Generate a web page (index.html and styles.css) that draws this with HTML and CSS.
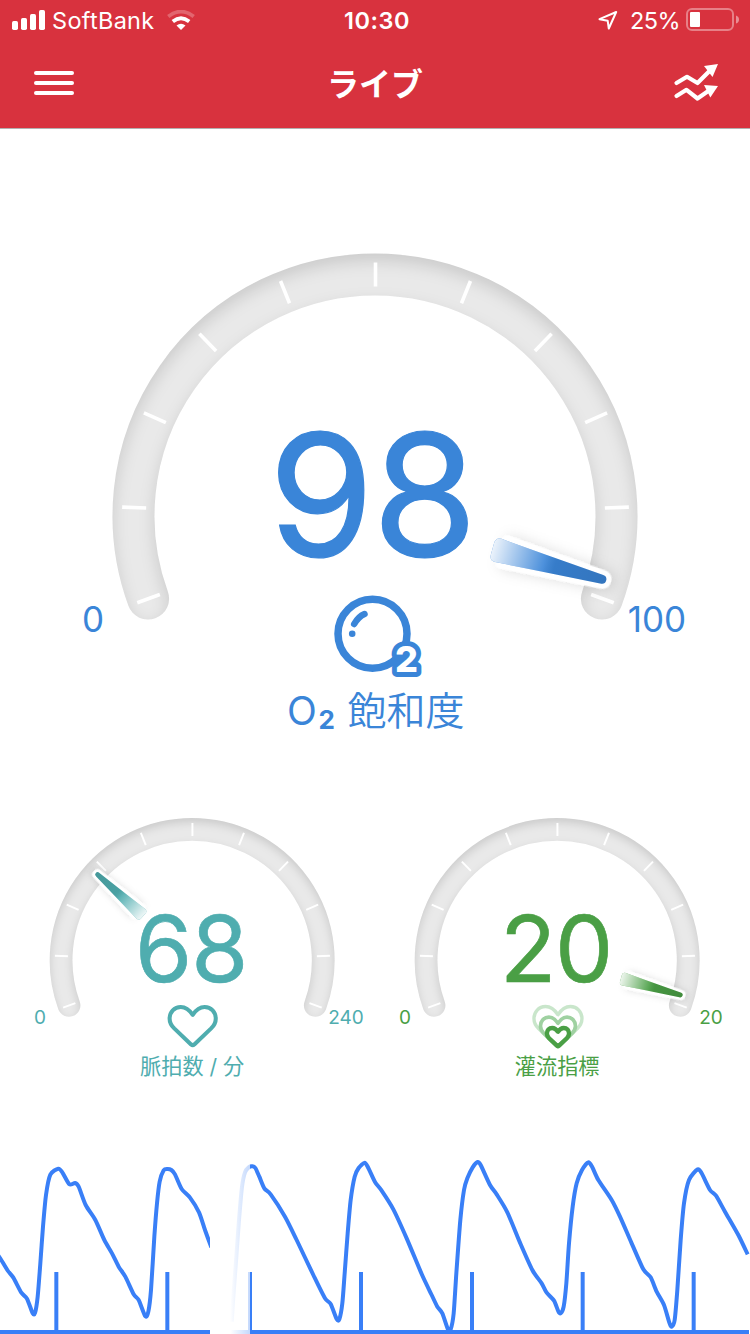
FILE: index.html
```
<!DOCTYPE html>
<html lang="ja">
<head>
    <meta charset="UTF-8">
    <meta name="viewport" content="width=device-width, initial-scale=1.0">
    <title>ライブ</title>
    <link rel="stylesheet" href="styles.css">
</head>
<body>
    <!-- shared gauge parts, origin is the dial centre -->
    <svg class="defs" width="0" height="0">
        <defs>
            <filter id="inset" filterUnits="userSpaceOnUse" x="-300" y="-300" width="600" height="480" color-interpolation-filters="sRGB">
                <feFlood flood-color="#000" flood-opacity="0.13" result="dark"/>
                <feComposite in="dark" in2="SourceAlpha" operator="out" result="outside"/>
                <feGaussianBlur in="outside" stdDeviation="8" result="blur"/>
                <feOffset in="blur" dy="7" result="moved"/>
                <feComposite in="moved" in2="SourceAlpha" operator="in" result="shade"/>
                <feMerge>
                    <feMergeNode in="SourceGraphic"/>
                    <feMergeNode in="shade"/>
                </feMerge>
            </filter>
            <filter id="drop" filterUnits="userSpaceOnUse" x="-60" y="-280" width="120" height="200">
                <feDropShadow dx="0" dy="-4" stdDeviation="7" flood-color="#000" flood-opacity="0.13"/>
            </filter>
            <linearGradient id="fade" x1="0" y1="0" x2="0" y2="1">
                <stop offset="0" stop-color="#000" stop-opacity="0.12"/>
                <stop offset="0.45" stop-color="#000" stop-opacity="0.07"/>
                <stop offset="0.55" stop-color="#fff" stop-opacity="0.1"/>
                <stop offset="1" stop-color="#fff" stop-opacity="0.9"/>
            </linearGradient>
            <g id="dial">
                <path class="band" d="M-226.9 82.6A241.5 241.5 0 1 1 226.9 82.6" filter="url(#inset)"/>
                <g class="ticks" transform="translate(.5 0)">
                    <path id="tick" d="M0 -253.500V-229.500"/>
                    <use href="#tick" transform="rotate(-110)"/>
                    <use href="#tick" transform="rotate(-88)"/>
                    <use href="#tick" transform="rotate(-66)"/>
                    <use href="#tick" transform="rotate(-44)"/>
                    <use href="#tick" transform="rotate(-22)"/>
                    <use href="#tick" transform="rotate(22)"/>
                    <use href="#tick" transform="rotate(44)"/>
                    <use href="#tick" transform="rotate(66)"/>
                    <use href="#tick" transform="rotate(88)"/>
                    <use href="#tick" transform="rotate(110)"/>
                </g>
            </g>
            <g id="needle">
                <path class="needle-edge" filter="url(#drop)" d="M-4.5 -235Q-4.5 -240 0 -240Q4.5 -240 4.5 -235L12 -134H-12Z"/>
                <path fill="currentColor" d="M-4.5 -235Q-4.5 -240 0 -240Q4.5 -240 4.5 -235L12 -128Q12 -122 6 -122H-6Q-12 -122 -12 -128Z"/>
                <path fill="url(#fade)" d="M-4.5 -235Q-4.5 -240 0 -240Q4.5 -240 4.5 -235L12 -128Q12 -122 6 -122H-6Q-12 -122 -12 -128Z"/>
            </g>
            <path id="heart" d="M0 -56C-6 -65 -13 -70.5 -22 -70.5C-34 -70.5 -42.5 -61 -42.5 -49C-42.5 -41 -39 -36 -34 -31L-3 -1.5Q0 1 3 -1.5L34 -31C39 -36 42.5 -41 42.5 -49C42.5 -61 34 -70.5 22 -70.5C13 -70.5 6 -65 0 -56Z"/>
        </defs>
    </svg>

    <header class="header">
        <div class="status">
            <div class="status-left">
                <svg class="signal" width="34" height="20" viewBox="0 0 34 20">
                    <rect x="0" y="11" width="6" height="9" rx="1.7"/>
                    <rect x="9" y="8" width="6" height="12" rx="1.7"/>
                    <rect x="18" y="4" width="6" height="16" rx="1.7"/>
                    <rect x="27" y="0" width="6" height="20" rx="1.7"/>
                </svg>
                <span class="carrier">SoftBank</span>
                <svg class="wifi" width="28" height="20" viewBox="0 0 28 20">
                    <path class="dim" d="M1.300 6.500Q14 -3.300 26.700 6.500"/>
                    <path d="M5.800 11.500Q14 5 22.200 11.500"/>
                    <path class="solid" d="M14 20L9.500 15.500Q14 12 18.500 15.500Z"/>
                </svg>
            </div>
            <div class="clock">10:30</div>
            <div class="status-right">
                <svg class="location" width="20" height="20" viewBox="0 0 20 20">
                    <path d="M18.200 2L10.800 18.500L9.700 10.800L1.500 9.200Z"/>
                </svg>
                <span class="percent">25%</span>
                <svg class="battery" width="54" height="24" viewBox="0 0 54 24">
                    <rect class="case" x="1" y="1" width="46" height="21" rx="5"/>
                    <rect x="4" y="4" width="10" height="15" rx="1"/>
                    <path class="nub" d="M50 7.500Q53 8.500 53 11.500Q53 14.500 50 15.500Z"/>
                </svg>
            </div>
        </div>
        <nav class="nav">
            <div class="menu">
                <span></span>
                <span></span>
                <span></span>
            </div>
            <h1>ライブ</h1>
            <svg class="trend" width="46" height="38" viewBox="0 0 46 38">
                <path class="line" d="M3.500 19L14 12.800L24.500 19L37 6.500"/>
                <path class="line" d="M3.500 32L13.500 25.800L24.500 34.500L36 26.500"/>
                <path d="M45 0L39.500 13L31 2Z"/>
                <path d="M45 22L37.300 33.500L31 21Z"/>
            </svg>
        </nav>
    </header>

    <main>
        <svg class="gauge gauge-main blue" viewBox="-330 -270 660 500">
            <use href="#dial"/>
            <text class="value" x="-2" y="40" textLength="209">98</text>
            <use href="#needle" transform="rotate(105.6)"/>
            <text class="limit" x="-282" y="116">0</text>
            <text class="limit" x="282" y="116">100</text>
            <g class="icon">
                <circle cx="-2.500" cy="117.800" r="34.500"/>
                <path class="shine" d="M-20.800 108Q-16.500 100.500 -10.500 98"/>
                <circle class="dot" cx="-22.800" cy="117.800" r="3.300"/>
                <text class="sub" x="31.500" y="156">2</text>
            </g>
            <text class="label label-o" x="-88" y="209">O</text>
            <text class="label label-sub" x="-56.500" y="213">2</text>
            <text class="label" x="-27.500" y="208.500">飽和度</text>
        </svg>

        <div class="row">
            <svg class="gauge teal" viewBox="-330 -270 660 500">
                <use href="#dial"/>
                <use href="#needle" transform="rotate(-47.7)"/>
                <text class="value" x="-1" y="40" textLength="209">68</text>
                <text class="limit" x="-280.500" y="116">0</text>
                <text class="limit" x="283.500" y="116">240</text>
                <use class="icon" href="#heart" transform="translate(1 156)"/>
                <text class="label middle" x="0" y="209.500">脈拍数 / 分</text>
            </svg>
            <svg class="gauge green" viewBox="-330 -270 660 500">
                <use href="#dial"/>
                <text class="value" x="-1" y="40" textLength="209">20</text>
                <use href="#needle" transform="rotate(105.6)"/>
                <text class="limit" x="-280.500" y="116">0</text>
                <text class="limit" x="283.500" y="116">20</text>
                <use class="icon heart-far" href="#heart" transform="translate(1.5 158) scale(1.04)"/>
                <use class="icon heart-mid" href="#heart" transform="translate(1.5 158) scale(.76)"/>
                <use class="icon heart-near" href="#heart" transform="translate(1.5 158) scale(.48)"/>
                <text class="label middle" x="0" y="209.500">灌流指標</text>
            </svg>
        </div>
    </main>

    <!-- pleth waveform, 3 units per pixel -->
    <svg class="wave" viewBox="0 0 2250 582">
        <defs>
            <linearGradient id="sweep">
                <stop offset="0" stop-color="#fff"/>
                <stop offset="1" stop-color="#fff" stop-opacity=".7"/>
            </linearGradient>
        </defs>
        <path class="trace" id="trace-new"/>
        <path class="trace" id="trace-old"/>
        <path class="beats" d="M169 396V576M502 396V576M750 396V576M1083 396V576M1416 396V576M1748 396V576M2081 396V576"/>
        <path class="beats" d="M0 576H630M690 576H2247"/>
        <rect x="630" y="0" width="60" height="582" fill="#fff"/>
        <rect x="690" y="0" width="60" height="582" fill="url(#sweep)"/>
    </svg>

    <script>
        const newest = [
            [-10, 340], [2, 357], [24, 393], [40, 413], [64, 458], [81, 476], [98, 520], [105, 519], [113, 470], [121, 370],
            [129, 260], [138, 165], [151, 104], [175, 86], [187, 97], [208, 133], [225, 129], [236, 140], [257, 195],
            [286, 240], [313, 300], [336, 340], [356, 380], [376, 410], [401, 463], [416, 480], [436, 529], [445, 515],
            [453, 450], [463, 290], [471, 190], [479, 125], [491, 91], [502, 87], [514, 90], [525, 103], [545, 147],
            [570, 173], [597, 217], [615, 270], [634, 322]
        ];
        const oldest = [
            [695, 545], [700, 470], [709, 350], [717, 240], [726, 140], [735, 97], [746, 82], [757, 79], [766, 84],
            [778, 110], [793, 145], [812, 163], [855, 230], [890, 300], [940, 405], [975, 475], [992, 492], [1010, 537],
            [1018, 538], [1027, 490], [1034, 400], [1043, 280], [1052, 180], [1064, 110], [1076, 84], [1094, 68],
            [1105, 84], [1125, 126], [1145, 152], [1180, 208], [1220, 295], [1265, 402], [1295, 465], [1312, 500],
            [1327, 520], [1344, 568], [1352, 568], [1361, 520], [1369, 400], [1381, 240], [1392, 150], [1402, 115],
            [1418, 82], [1433, 66], [1442, 75], [1470, 135], [1490, 163], [1522, 217], [1560, 308], [1597, 390],
            [1625, 430], [1640, 458], [1662, 482], [1675, 514], [1682, 520], [1691, 500], [1699, 430], [1707, 310],
            [1718, 200], [1730, 130], [1746, 90], [1765, 67], [1777, 82], [1795, 120], [1835, 180], [1860, 230],
            [1895, 310], [1930, 388], [1952, 412], [1970, 455], [1992, 495], [2008, 548], [2015, 560], [2024, 540],
            [2032, 450], [2042, 300], [2052, 190], [2067, 120], [2093, 88], [2105, 100], [2130, 150], [2148, 167],
            [2175, 215], [2215, 285], [2243, 343]
        ];

        // smooth curve through all the samples
        function curve(points) {
            let d = 'M' + points[0];
            for (let i = 0; i < points.length - 1; i++) {
                const a = points[i - 1] || points[i];
                const b = points[i];
                const c = points[i + 1];
                const e = points[i + 2] || c;
                d += 'C' + [
                    b[0] + (c[0] - a[0]) / 8, b[1] + (c[1] - a[1]) / 8,
                    c[0] - (e[0] - b[0]) / 8, c[1] - (e[1] - b[1]) / 8,
                    c[0], c[1]
                ];
            }
            return d;
        }

        document.getElementById('trace-new').setAttribute('d', curve(newest));
        document.getElementById('trace-old').setAttribute('d', curve(oldest));
    </script>
</body>
</html>
```

FILE: styles.css
```
* {
    box-sizing: border-box;
}

body {
    margin: 0;
    width: 750px;
    height: 1334px;
    background-color: #fff;
    font-family: Inter, "Noto Sans CJK JP", sans-serif;
    display: flex;
    flex-direction: column;
    overflow: hidden;
}

.defs {
    position: absolute;
}

/* header */
.header {
    flex: none;
    height: 129px;
    background-color: #d8323e;
    border-bottom: 1px solid #b3b0b0;
    color: #fff;
}

.header svg {
    fill: #fff;
    flex: none;
}

.status {
    height: 40px;
    padding: 0 10px 0 12px;
    display: grid;
    grid-template-columns: 1fr auto 1fr;
    align-items: center;
    font-size: 23.5px;
    line-height: 40px;
}

.status-left,
.status-right {
    display: flex;
    align-items: center;
    height: 40px;
}

.status-right {
    justify-content: flex-end;
}

.carrier {
    margin-left: 6px;
    padding-top: 1px;
    letter-spacing: 0.3px;
}

.wifi {
    margin-left: 12px;
}

.header .wifi path {
    fill: none;
    stroke: #fff;
    stroke-width: 3.8;
}

.header .wifi .dim {
    opacity: 0.25;
}

.header .wifi .solid {
    fill: #fff;
    stroke: none;
}

.clock {
    padding-left: 2px;
    height: 40px;
    line-height: 41px;
    font-weight: 600;
    letter-spacing: 0.5px;
}

.header .location {
    fill: none;
    stroke: #fff;
    stroke-width: 2;
    stroke-linejoin: round;
    margin-right: 12px;
}

.percent {
    margin-right: 6px;
    padding-top: 1px;
    letter-spacing: -0.6px;
}

.header .battery .case {
    fill: none;
    stroke: #fff;
    stroke-width: 2;
    opacity: 0.38;
}

.battery .nub {
    opacity: 0.45;
}

.nav {
    height: 88px;
    padding: 0 31px 0 34px;
    display: grid;
    grid-template-columns: 1fr auto 1fr;
    align-items: center;
}

.menu {
    display: flex;
    flex-direction: column;
    gap: 6px;
    width: 40px;
    margin-bottom: 2px;
}

.menu span {
    height: 4px;
    border-radius: 2px;
    background-color: #fff;
}

.nav h1 {
    margin: 0 3px 0 0;
    padding-top: 2px;
    font-size: 32px;
    font-weight: 700;
    line-height: 86px;
}

.trend {
    justify-self: end;
    margin-bottom: 2px;
}

.header .trend .line {
    fill: none;
    stroke: #fff;
    stroke-width: 4.2;
    stroke-linecap: round;
    stroke-linejoin: round;
}

/* gauges */
main {
    flex: 1;
    padding-top: 116.5px;
    display: flex;
    flex-direction: column;
    align-items: center;
}

.row {
    display: flex;
    gap: 6.7px;
    margin-top: 68.4px;
}

.gauge {
    width: 358.3px;
    height: 271.4px;
    overflow: visible;
}

.gauge-main {
    width: 660px;
    height: 500px;
}

.blue {
    color: #3a85d8;
}

.teal {
    color: #4fadaf;
}

.green {
    color: #4a9f45;
}

.band {
    fill: none;
    stroke: #e9e9e9;
    stroke-width: 42;
    stroke-linecap: round;
}

.ticks {
    stroke: #fff;
    stroke-width: 3.6;
}

.needle-edge {
    fill: #fff;
    stroke: #fff;
    stroke-width: 10;
    stroke-linejoin: round;
}

.gauge text {
    fill: currentColor;
}

.value {
    font-size: 170px;
    font-weight: 400;
    text-anchor: middle;
    stroke: currentColor;
    stroke-width: 1.2;
}

.limit {
    font-size: 35px;
    text-anchor: middle;
}

.label {
    font-size: 39px;
    font-weight: 400;
}

.gauge-main .label {
    font-weight: 350;
}

.gauge-main .label-o {
    font-weight: 400;
}

.gauge-main .label-sub {
    font-size: 26px;
    font-weight: 700;
}

.middle {
    text-anchor: middle;
}

.icon {
    fill: none;
    stroke: currentColor;
    stroke-width: 7.5;
    stroke-linecap: round;
    stroke-linejoin: round;
}

.icon .shine {
    stroke-width: 6.5;
}

.icon .dot {
    fill: currentColor;
    stroke: none;
}

.gauge .sub {
    fill: #fff;
    font-size: 36px;
    font-weight: 800;
    text-anchor: middle;
    stroke-width: 10;
    paint-order: stroke;
}

.heart-far {
    color: #c9e6cb;
    stroke-width: 6;
}

.heart-mid {
    color: #9fd1a1;
    stroke-width: 9;
}

.heart-near {
    stroke-width: 17;
}

/* waveform */
.wave {
    flex: none;
    width: 750px;
    height: 194px;
}

.trace,
.beats {
    fill: none;
    stroke: #397ff7;
    stroke-width: 12;
    stroke-linejoin: round;
}
```
